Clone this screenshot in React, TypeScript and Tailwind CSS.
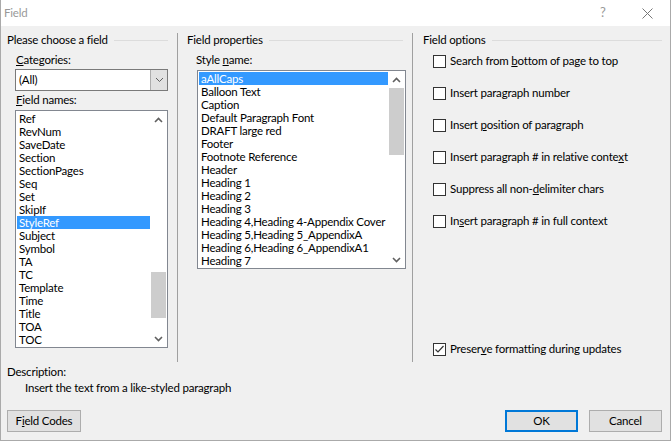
import type { ReactNode } from "react";

const fieldNames = [
  "Ref",
  "RevNum",
  "SaveDate",
  "Section",
  "SectionPages",
  "Seq",
  "Set",
  "SkipIf",
  "StyleRef",
  "Subject",
  "Symbol",
  "TA",
  "TC",
  "Template",
  "Time",
  "Title",
  "TOA",
  "TOC",
];

const styleNames = [
  "aAllCaps",
  "Balloon Text",
  "Caption",
  "Default Paragraph Font",
  "DRAFT large red",
  "Footer",
  "Footnote Reference",
  "Header",
  "Heading 1",
  "Heading 2",
  "Heading 3",
  "Heading 4,Heading 4-Appendix Cover",
  "Heading 5,Heading 5_AppendixA",
  "Heading 6,Heading 6_AppendixA1",
  "Heading 7",
];

function Chevron({ up }: { up?: boolean }) {
  return (
    <svg width="9" height="6" viewBox="0 0 9 6" className="block">
      <path
        d={up ? "M1 5 L4.5 1.5 L8 5" : "M1 1 L4.5 4.5 L8 1"}
        fill="none"
        stroke="#606060"
        strokeWidth="1.6"
      />
    </svg>
  );
}

function GroupHeader({ title, right }: { title: string; right: number }) {
  return (
    <div className="flex h-[14px] items-center" style={{ marginRight: right }}>
      <span className="whitespace-nowrap">{title}</span>
      <div className="ml-[6px] h-px flex-1 bg-[#dcdcdc]" />
    </div>
  );
}

function ListBox({
  items,
  selected,
  width,
  thumbTop,
  thumbHeight,
}: {
  items: string[];
  selected: string;
  width: number;
  thumbTop: number;
  thumbHeight: number;
}) {
  return (
    <div className="flex border border-[#828790] bg-white" style={{ width }}>
      <div className="min-w-0 flex-1 py-px pl-px">
        {items.map((item) => (
          <div
            key={item}
            className={`h-[13px] overflow-hidden whitespace-nowrap pl-[2px] leading-[13px] ${
              item === selected ? "bg-[#3399ff] text-white" : ""
            }`}
          >
            {item}
          </div>
        ))}
      </div>
      <div className="flex w-[17px] flex-col items-center bg-white">
        <div className="flex h-[17px] w-full items-center justify-center">
          <Chevron up />
        </div>
        <div className="relative w-full flex-1">
          <div
            className="absolute left-px right-px bg-[#cdcdcd]"
            style={{ top: thumbTop, height: thumbHeight }}
          />
        </div>
        <div className="flex h-[17px] w-full items-center justify-center">
          <Chevron />
        </div>
      </div>
    </div>
  );
}

function Check({ label, checked }: { label: ReactNode; checked?: boolean }) {
  return (
    <div className="flex h-[14px] items-center">
      <div className="ml-[10px] flex h-[13px] w-[13px] items-center justify-center border border-[#333333] bg-white">
        {checked && (
          <svg width="11" height="11" viewBox="0 0 11 11">
            <path d="M1.5 5.5 L4 8 L9.5 2" fill="none" stroke="#333333" strokeWidth="1.2" />
          </svg>
        )}
      </div>
      <span className="ml-[4px] whitespace-nowrap">{label}</span>
    </div>
  );
}

function Button({ children, primary, width }: { children: ReactNode; primary?: boolean; width: number }) {
  return (
    <div
      className={`flex h-[22px] items-center justify-center bg-[#e1e1e1] font-normal ${
        primary ? "border-2 border-[#0078d7]" : "border border-[#adadad]"
      }`}
      style={{ width }}
    >
      {children}
    </div>
  );
}

export default function App() {
  return (
    <div className="flex h-[441px] w-[671px] flex-col border border-t-0 border-[#aaaaaa] bg-[#f0f0f0] font-['Lato','Noto_Sans',sans-serif] text-[11.5px] leading-[14px] tracking-[-0.2px] text-black">
      <div className="relative flex h-[26px] items-center bg-white pl-[3px] text-[#999999]">
        <span>Field</span>
        <span className="absolute left-[599px] top-[5px] text-[13px] text-[#999999]">?</span>
        <svg width="11" height="11" viewBox="0 0 11 11" className="absolute left-[641px] top-[8px]">
          <path d="M0.5 0.5 L10.5 10.5 M10.5 0.5 L0.5 10.5" stroke="#777777" strokeWidth="1" />
        </svg>
      </div>

      <div className="mt-[7px] flex h-[329px]">
        <div className="flex w-[176px] flex-col pl-[6px]">
          <GroupHeader title="Please choose a field" right={9} />
          <div className="ml-[9px] mt-[6px]">
            <u>C</u>ategories:
          </div>
          <div className="ml-[8px] mt-[2px] flex h-[22px] w-[153px] border border-[#7a7a7a] bg-white">
            <div className="flex flex-1 items-center pl-[3px]">(All)</div>
            <div className="flex w-[17px] items-center justify-center border-l border-[#adadad] bg-[#e1e1e1]">
              <svg width="9" height="6" viewBox="0 0 9 6">
                <path d="M1 1 L4.5 4.5 L8 1" fill="none" stroke="#606060" strokeWidth="1" />
              </svg>
            </div>
          </div>
          <div className="ml-[9px] mt-[2px]">
            <u>F</u>ield names:
          </div>
          <div className="ml-[8px] mt-[3px]">
            <ListBox items={fieldNames} selected="StyleRef" width={153} thumbTop={144} thumbHeight={46} />
          </div>
        </div>

        <div className="flex w-[235px] flex-col border-l border-[#a0a0a0] pl-[9px]">
          <GroupHeader title="Field properties" right={9} />
          <div className="ml-[9px] mt-[6px]">
            Style <u>n</u>ame:
          </div>
          <div className="ml-[10px] mt-[3px]">
            <ListBox items={styleNames} selected="aAllCaps" width={209} thumbTop={0} thumbHeight={67} />
          </div>
        </div>

        <div className="flex flex-1 flex-col border-l border-[#a0a0a0] pb-[6px] pl-[10px]">
          <GroupHeader title="Field options" right={8} />
          <div className="mt-[7px] flex flex-col gap-[18px]">
            <Check label={<>Search from <u>b</u>ottom of page to top</>} />
            <Check label={<>Insert para<u>g</u>raph number</>} />
            <Check label={<>Insert <u>p</u>osition of paragraph</>} />
            <Check label={<>Insert paragraph # in relative conte<u>x</u>t</>} />
            <Check label={<>Suppress all non-<u>d</u>elimiter chars</>} />
            <Check label={<>In<u>s</u>ert paragraph # in full context</>} />
          </div>
          <div className="mt-auto">
            <Check checked label={<>Preser<u>v</u>e formatting during updates</>} />
          </div>
        </div>
      </div>

      <div className="ml-[6px] mt-[3px]">Description:</div>
      <div className="ml-[24px] mt-[2px]">Insert the text from a like-styled paragraph</div>

      <div className="mt-[15px] flex items-center pl-[6px] pr-[8px]">
        <Button width={74}>
          F<u>i</u>eld Codes
        </Button>
        <div className="flex-1" />
        <Button primary width={73}>
          OK
        </Button>
        <div className="w-[11px]" />
        <Button width={73}>Cancel</Button>
      </div>
    </div>
  );
}
